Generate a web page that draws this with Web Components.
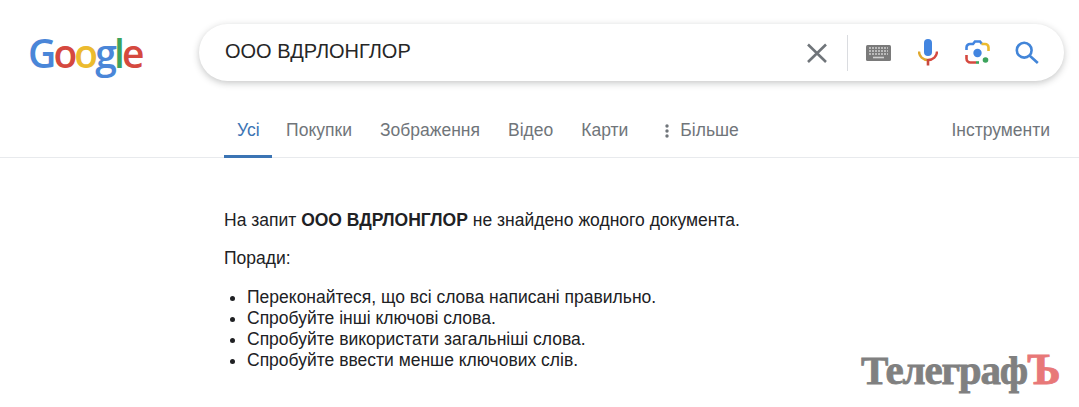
<!DOCTYPE html>
<html lang="uk">
<head>
<meta charset="utf-8">
<title>ООО ВДРЛОНГЛОР</title>
<style>
	html, body { margin: 0; background: #fff; }
	body { width: 1079px; height: 407px; overflow: hidden; position: relative; font-family: "Liberation Sans", Arial, sans-serif; color: #202124; }
</style>
</head>
<body>
<search-header query="ООО ВДРЛОНГЛОР"></search-header>
<tab-bar>
	<tab-item active>Усі</tab-item>
	<tab-item>Покупки</tab-item>
	<tab-item>Зображення</tab-item>
	<tab-item>Відео</tab-item>
	<tab-item>Карти</tab-item>
	<tab-item more>Більше</tab-item>
	<tab-item slot="tools">Інструменти</tab-item>
</tab-bar>
<no-results query="ООО ВДРЛОНГЛОР">
	<li>Переконайтеся, що всі слова написані правильно.</li>
	<li>Спробуйте інші ключові слова.</li>
	<li>Спробуйте використати загальніші слова.</li>
	<li>Спробуйте ввести менше ключових слів.</li>
</no-results>
<site-watermark></site-watermark>

<script>
(function () {
	class SearchHeader extends HTMLElement {
		constructor() {
			super();
			this._shadowRoot = this.attachShadow({ mode: "open" });
			this._shadowRoot.innerHTML = `
			<style>
			:host { display: flex; align-items: flex-start; padding: 24px 15px 0 28px; height: 57px; }
			.logo { width: 171px; height: 57px; display: flex; align-items: center; font-family: "Open Sans", sans-serif; font-weight: 600; font-size: 39px; letter-spacing: -2.900px; line-height: 1; }
			.logo span { display: block; }
			.box { flex: 1; height: 57px; display: flex; align-items: center; background: #fff; border-radius: 29px; box-shadow: 0 2px 7px rgba(32,33,36,.26); padding-left: 26px; box-sizing: border-box; }
			.q { flex: 1; font-size: 20px; color: #262626; white-space: nowrap; margin-top: -3px; }
			svg { display: block; flex: none; }
			.sep { width: 1px; height: 36px; background: #dadce0; margin: 0 18px 0 19px; flex: none; }
			</style>
			<div class="logo"><span style="color:#4a86d8">G</span><span style="color:#d5493f">o</span><span style="color:#ecbb2e">o</span><span style="color:#4a86d8">g</span><span style="color:#3ca35c">l</span><span style="color:#d5493f">e</span></div>
			<div class="box">
				<div class="q"></div>
				<svg width="22" height="22" viewBox="0 0 22 22" fill="none" stroke="#70757a" stroke-width="2.6"><path d="M2 2.5 20 20M20 2.5 2 20"/></svg>
				<div class="sep"></div>
				<svg width="25" height="16" viewBox="0 0 25 16"><rect width="25" height="16" rx="1.5" fill="#7a7a7a"/><path d="M3 3h19M3 6h19M3 9h19" stroke="#cfcfcf" stroke-width="1.6" stroke-dasharray="2 1"/><path d="M7 12.5h11" stroke="#cfcfcf" stroke-width="1.6"/></svg>
				<svg style="margin-left:27px" width="20" height="27" viewBox="1 0 20 27" fill="none"><rect x="7" y="0" width="8" height="17" rx="4" fill="#4285e0"/><path d="M2 12.5c0 5 4 8.500 9 8.500" stroke="#e0a82e" stroke-width="2.4"/><path d="M20 12.500c0 5-4 8.500-9 8.500" stroke="#d5493f" stroke-width="2.4"/><path d="M11 20v6.500" stroke="#c9473d" stroke-width="2.6"/></svg>
				<svg style="margin-left:27px" width="25" height="25" viewBox="0 0 25 25" fill="none" stroke-width="2.6"><path d="M1.500 10V7.500a3.500 3.500 0 0 1 3.500-3.500h3l2-2.500h5l2 2.500" stroke="#4285e0"/><path d="M16.500 4h3.500a3.500 3.500 0 0 1 3.500 3.500V11" stroke="#ecbb2e"/><path d="M1.500 15v3.500a4 4 0 0 0 4 4h5.500" stroke="#d5493f"/><path d="M11 22.500h3" stroke="#3ca35c"/><circle cx="12.500" cy="13" r="4.200" fill="#4285e0" stroke="none"/><circle cx="20.500" cy="20" r="2.800" fill="#3ca35c" stroke="none"/></svg>
				<svg style="margin-left:25px;margin-right:25px" width="24" height="23" viewBox="0 0 24 23" fill="none" stroke="#4285d8" stroke-width="2.600"><circle cx="9.200" cy="9.200" r="7.400"/><path d="M14.500 14.500 22.800 22"/></svg>
			</div>`;
			this._shadowRoot.querySelector(".q").textContent = this.getAttribute("query");
		}
	}

	class TabBar extends HTMLElement {
		constructor() {
			super();
			this._shadowRoot = this.attachShadow({ mode: "open" });
			this._shadowRoot.innerHTML = `
			<style>
			:host { display: flex; justify-content: space-between; height: 53px; margin-top: 23px; padding: 0 16px 0 224px; border-bottom: 1px solid #e8eaed; }
			.main, .tools { display: flex; }
			</style>
			<div class="main"><slot></slot></div>
			<div class="tools"><slot name="tools"></slot></div>`;
		}
	}

	class TabItem extends HTMLElement {
		constructor() {
			super();
			this._shadowRoot = this.attachShadow({ mode: "open" });
			this._shadowRoot.innerHTML = `
			<style>
			:host { display: flex; align-items: center; gap: 11px; height: 51px; padding: 1px 14px 0; font-size: 17.500px; color: #70757a; white-space: nowrap; }
			:host([active]) { color: #3b74b4; border-bottom: 3px solid #3b74b4; padding: 2px 12.500px 0 13px; height: 49px; margin-bottom: -1px; }
			:host([more]) { margin-left: 23px; padding-left: 0; }
			:host([slot="tools"]) { padding: 1px 13px 0 0; }
			svg { display: block; }
			</style>
			<svg width="4" height="14" viewBox="0 0 4 14" fill="#70757a" hidden><circle cx="2" cy="2" r="1.700"/><circle cx="2" cy="7" r="1.700"/><circle cx="2" cy="12" r="1.700"/></svg>
			<slot></slot>`;
			if (this.hasAttribute("more")) this._shadowRoot.querySelector("svg").removeAttribute("hidden");
			else this._shadowRoot.querySelector("svg").remove();
		}
	}

	class NoResults extends HTMLElement {
		constructor() {
			super();
			this._shadowRoot = this.attachShadow({ mode: "open" });
			this._shadowRoot.innerHTML = `
			<style>
			:host { display: block; padding: 52px 0 0 224px; font-size: 17.500px; line-height: 21px; color: #202124; }
			p { margin: 0 0 17px; }
			b { font-weight: 700; }
			ul { margin: 18px 0 0; padding-left: 23px; }
			::slotted(li) { line-height: 21px; }
			</style>
			<p>На запит <b></b> не знайдено жодного документа.</p>
			<p>Поради:</p>
			<ul><slot></slot></ul>`;
			this._shadowRoot.querySelector("b").textContent = this.getAttribute("query");
		}
	}

	class SiteWatermark extends HTMLElement {
		constructor() {
			super();
			this._shadowRoot = this.attachShadow({ mode: "open" });
			this._shadowRoot.innerHTML = `
			<style>
			:host { display: block; position: absolute; left: 861px; top: 347px; font-family: "Liberation Serif", serif; font-weight: 700; font-size: 41px; line-height: 46px; color: #808080; -webkit-text-stroke: 0.8px #808080; white-space: nowrap; letter-spacing: -1.200px; }
			span { color: #e87878; -webkit-text-stroke: 0.8px #e87878; font-size: 44px; }
			</style>
			Телеграф<span>Ъ</span>`;
		}
	}

	customElements.define("search-header", SearchHeader);
	customElements.define("tab-bar", TabBar);
	customElements.define("tab-item", TabItem);
	customElements.define("no-results", NoResults);
	customElements.define("site-watermark", SiteWatermark);
})();
</script>
</body>
</html>
